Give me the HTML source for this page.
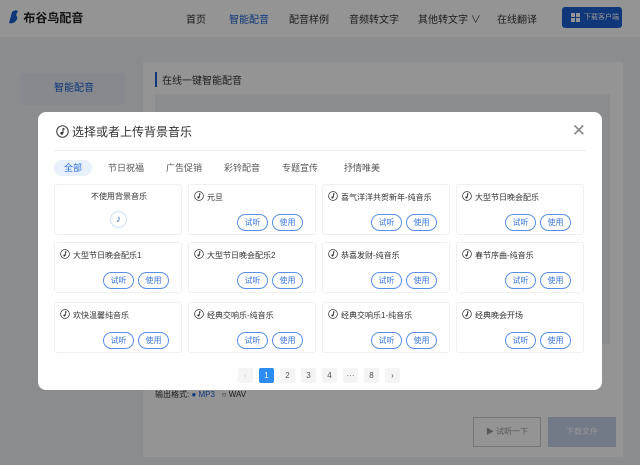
<!DOCTYPE html>
<html><head><meta charset="utf-8"><style>
*{margin:0;padding:0;box-sizing:border-box}
body{width:640px;height:465px;overflow:hidden;position:relative;font-family:"Liberation Sans","Noto Sans CJK SC",sans-serif;background:#f0f2f5;color:#333}
.hd{position:absolute;left:0;top:0;width:640px;height:37px;background:#fff;font-size:10px}
.hd span{position:absolute;top:11px;color:#333}
.bb{position:absolute;left:562px;top:7px;width:60px;height:21px;background:#1a5fd0;border-radius:3px;color:#fff;font-size:7px;line-height:21px;padding-left:22px;white-space:nowrap}
.side{position:absolute;left:20px;top:73px;width:106px;height:32px;background:#e8edf5;border-radius:4px;font-size:10px;color:#1a5fd0;line-height:32px;padding-left:34px}
.main{position:absolute;left:143px;top:62px;width:480px;height:395px;background:#fff}
.ov{position:absolute;inset:0;background:rgba(0,0,0,.42)}
.m{position:absolute;left:38px;top:112px;width:564px;height:278px;background:#fff;border-radius:8px}
.t{position:absolute;left:18px;top:11px;font-size:12px;color:#333}
svg.ic{width:10px;height:10px;vertical-align:-1px;margin-right:3px}
.t svg.ic{width:13px;height:13px;vertical-align:-2px}
.x{position:absolute;right:16px;top:9px;font-size:17px;color:#888}
.ln{position:absolute;left:16px;right:16px;top:38px;border-top:1px solid #eee}
.tab{position:absolute;top:48px;font-size:9px;color:#555;height:16px;line-height:16px}
.tab.a{background:#e8f0fc;color:#2a6fd6;border-radius:8px;padding:0 10px;left:16px}
.c{position:absolute;width:128px;height:51px;border:1px solid #f0f0f0;border-radius:3px;font-size:8px;color:#333}
.c .n{position:absolute;left:5px;top:6px;white-space:nowrap}
.c .b{position:absolute;top:29px;width:31px;height:17px;border:1px solid #5a8fe6;border-radius:9px;color:#3c78de;text-align:center;line-height:15px;font-size:8px}
.c .b1{left:48px}.c .b2{left:83px}
.pg{position:absolute;top:256px;width:15px;height:15px;background:#f4f4f5;font-size:8px;text-align:center;line-height:15px;color:#555;border-radius:2px}
</style></head><body>
<div class="hd">
<span style="left:6px;top:9px;font-size:12px;font-weight:bold;color:#222"><svg width="14" height="16" viewBox="0 0 14 16" style="vertical-align:-3px"><path d="M3 14 L6 3 Q9 0 12 2 L10 6 Q13 9 9 13 Q6 15 3 14Z" fill="#1a5fd0"/></svg> 布谷鸟配音</span>
<span style="left:186px">首页</span><span style="left:229px;color:#1a5fd0">智能配音</span><span style="left:289px">配音样例</span><span style="left:349px">音频转文字</span><span style="left:418px">其他转文字 ∨</span><span style="left:497px">在线翻译</span>
<div class="bb"><svg width="9" height="9" viewBox="0 0 9 9" style="position:absolute;left:9px;top:6px"><path d="M0 0h4v4H0zM5 0h4v4H5zM0 5h4v4H0zM5 5h4v4H5z" fill="#fff"/></svg>下载客户端</div></div>
<div class="side">智能配音</div>
<div class="main"><div style="position:absolute;left:12px;top:10px;font-size:10px;border-left:2px solid #1a5fd0;padding-left:5px">在线一键智能配音</div>
<div style="position:absolute;left:12px;top:32px;width:455px;height:250px;background:#f0f1f4"></div>
<div style="position:absolute;left:12px;top:327px;font-size:8px">输出格式: <span style="color:#1a5fd0">● MP3</span> &nbsp; ○ WAV</div>
<div style="position:absolute;left:330px;top:355px;width:68px;height:30px;border:1px solid #ccc;font-size:8px;line-height:28px;text-align:center;color:#999">▶ 试听一下</div>
<div style="position:absolute;left:405px;top:355px;width:68px;height:30px;background:#c5d3ea;font-size:8px;line-height:30px;text-align:center;color:#fff">下载文件</div></div>
<div class="ov"></div>
<svg width="0" height="0" style="position:absolute"><defs><symbol id="n" viewBox="0 0 12 12"><circle cx="6" cy="6" r="5.3" fill="none" stroke="#444" stroke-width="1"/><path d="M6.5 3v4.5" stroke="#333" stroke-width="1"/><circle cx="5.3" cy="7.7" r="1.3" fill="#333"/><path d="M6.5 3l1.5 1" stroke="#333" stroke-width="1"/></symbol></defs></svg>
<div class="m">
<div class="t"><svg class="ic"><use href="#n"/></svg>选择或者上传背景音乐</div><div class="x">✕</div><div class="ln"></div>
<div class="tab a">全部</div><div class="tab" style="left:70px">节日祝福</div><div class="tab" style="left:128px">广告促销</div><div class="tab" style="left:186px">彩铃配音</div><div class="tab" style="left:244px">专题宣传</div><div class="tab" style="left:306px">抒情唯美</div>
<div class="c" style="left:16px;top:72px"><div class="n" style="left:36px">不使用背景音乐</div><div style="position:absolute;left:55px;top:26px;width:17px;height:17px;border-radius:50%;border:1px solid #cfe0f8;color:#2a6fd6;text-align:center;line-height:15px;font-size:10px">♪</div></div>
<div class="c" style="left:150px;top:72px"><div class="n"><svg class="ic"><use href="#n"/></svg>元旦</div><div class="b b1">试听</div><div class="b b2">使用</div></div>
<div class="c" style="left:284px;top:72px"><div class="n"><svg class="ic"><use href="#n"/></svg>喜气洋洋共贺新年-纯音乐</div><div class="b b1">试听</div><div class="b b2">使用</div></div>
<div class="c" style="left:418px;top:72px"><div class="n"><svg class="ic"><use href="#n"/></svg>大型节日晚会配乐</div><div class="b b1">试听</div><div class="b b2">使用</div></div>
<div class="c" style="left:16px;top:130px"><div class="n"><svg class="ic"><use href="#n"/></svg>大型节日晚会配乐1</div><div class="b b1">试听</div><div class="b b2">使用</div></div>
<div class="c" style="left:150px;top:130px"><div class="n"><svg class="ic"><use href="#n"/></svg>大型节日晚会配乐2</div><div class="b b1">试听</div><div class="b b2">使用</div></div>
<div class="c" style="left:284px;top:130px"><div class="n"><svg class="ic"><use href="#n"/></svg>恭喜发财-纯音乐</div><div class="b b1">试听</div><div class="b b2">使用</div></div>
<div class="c" style="left:418px;top:130px"><div class="n"><svg class="ic"><use href="#n"/></svg>春节序曲-纯音乐</div><div class="b b1">试听</div><div class="b b2">使用</div></div>
<div class="c" style="left:16px;top:190px"><div class="n"><svg class="ic"><use href="#n"/></svg>欢快温馨纯音乐</div><div class="b b1">试听</div><div class="b b2">使用</div></div>
<div class="c" style="left:150px;top:190px"><div class="n"><svg class="ic"><use href="#n"/></svg>经典交响乐-纯音乐</div><div class="b b1">试听</div><div class="b b2">使用</div></div>
<div class="c" style="left:284px;top:190px"><div class="n"><svg class="ic"><use href="#n"/></svg>经典交响乐1-纯音乐</div><div class="b b1">试听</div><div class="b b2">使用</div></div>
<div class="c" style="left:418px;top:190px"><div class="n"><svg class="ic"><use href="#n"/></svg>经典晚会开场</div><div class="b b1">试听</div><div class="b b2">使用</div></div>
<div class="pg" style="left:200px;color:#ccc">‹</div><div class="pg" style="left:221px;background:#2d8cf0;color:#fff">1</div><div class="pg" style="left:242px">2</div><div class="pg" style="left:263px">3</div><div class="pg" style="left:284px">4</div><div class="pg" style="left:305px">···</div><div class="pg" style="left:326px">8</div><div class="pg" style="left:347px">›</div>
</div>
</body></html>
